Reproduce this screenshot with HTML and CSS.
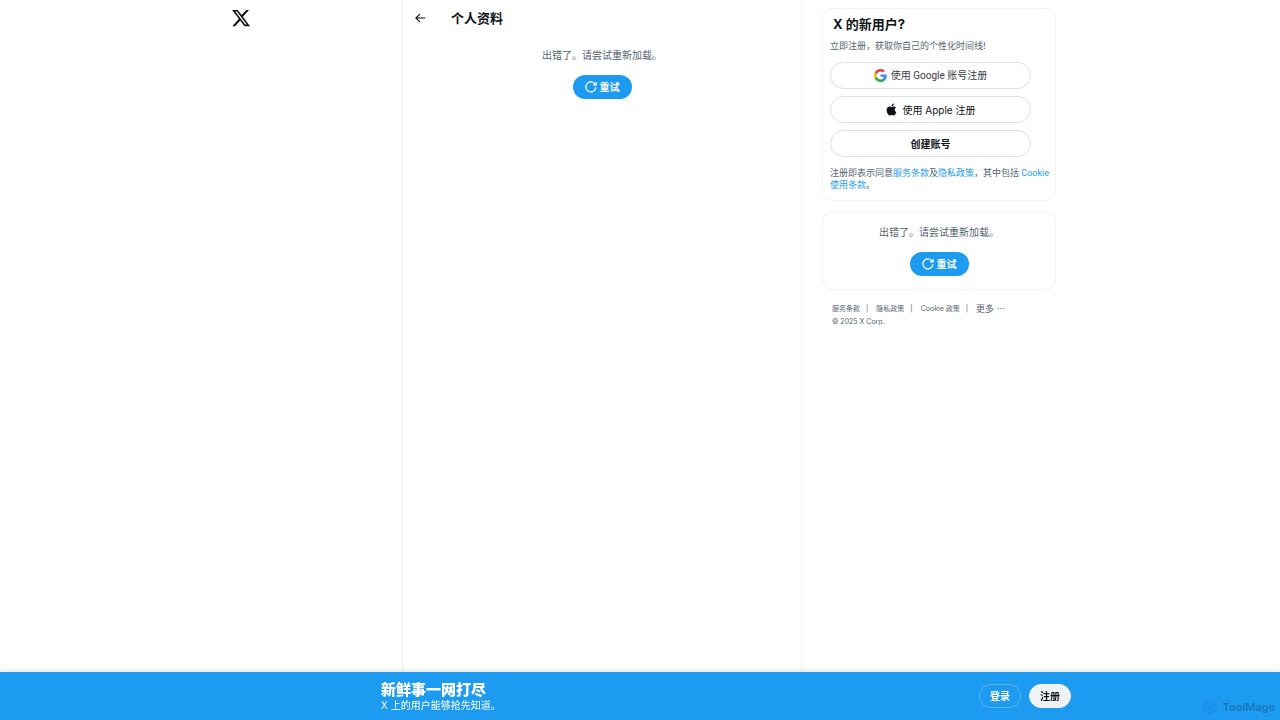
FILE: index.html
```html
<!DOCTYPE html>
<html lang="zh-CN">
<head>
    <meta charset="UTF-8">
    <meta name="viewport" content="width=device-width, initial-scale=1.0">
    <title>个人资料 / X</title>
    <link rel="stylesheet" href="styles.css">
</head>
<body>
    <!-- Shared icons -->
    <svg class="sprite" aria-hidden="true">
        <symbol id="icon-retry" viewBox="2 2 20.500 20.500">
            <path d="M20.500 12.500a8.500 8.500 0 1 1-2.600-6.600L20.600 8.500M21 3.500v5.200h-5.200" fill="none" stroke="currentColor" stroke-width="2"/>
        </symbol>
    </svg>

    <div class="page">
        <header class="nav">
            <a class="logo" href="#" aria-label="X">
                <svg viewBox="0 0 24 24"><path d="M18.244 2.250h3.308l-7.227 8.260 8.502 11.240H16.170l-5.214-6.817L4.990 21.750H1.680l7.730-8.835L1.254 2.250H8.080l4.713 6.231zm-1.161 17.520h1.833L7.084 4.126H5.117z"/></svg>
            </a>
        </header>

        <main class="main">
            <div class="top-bar">
                <button class="back-button" aria-label="返回">
                    <svg viewBox="0 0 24 24"><path d="M7.414 13l5.043 5.040-1.414 1.420L3.586 12l7.457-7.460 1.414 1.420L7.414 11H21v2H7.414z"/></svg>
                </button>
                <h1>个人资料</h1>
            </div>
            <div class="error">
                <p>出错了。请尝试重新加载。</p>
                <button class="retry-button"><svg><use href="#icon-retry"/></svg>重试</button>
            </div>
        </main>

        <aside class="sidebar">
            <section class="card signup">
                <h2>X 的新用户?</h2>
                <p class="intro">立即注册，获取你自己的个性化时间线!</p>
                <button class="signup-button google">
                    <svg viewBox="0 0 48 48">
                        <path fill="#EA4335" d="M24 9.500c3.540 0 6.710 1.220 9.210 3.600l6.850-6.850C35.900 2.380 30.470 0 24 0 14.620 0 6.510 5.380 2.560 13.220l7.980 6.190C12.430 13.720 17.740 9.500 24 9.500z"/>
                        <path fill="#4285F4" d="M46.980 24.550c0-1.570-.15-3.090-.38-4.550H24v9.020h12.940c-.58 2.960-2.260 5.480-4.780 7.180l7.730 6c4.510-4.180 7.090-10.360 7.090-17.650z"/>
                        <path fill="#FBBC05" d="M10.530 28.590c-.48-1.450-.76-2.990-.76-4.590s.27-3.140.76-4.590l-7.980-6.190C.92 16.460 0 20.120 0 24s.92 7.540 2.560 10.780l7.970-6.190z"/>
                        <path fill="#34A853" d="M24 48c6.480 0 11.930-2.130 15.890-5.810l-7.730-6c-2.150 1.450-4.920 2.300-8.160 2.300-6.260 0-11.570-4.220-13.470-9.910l-7.980 6.190C6.510 42.620 14.620 48 24 48z"/>
                    </svg>
                    使用 Google 账号注册
                </button>
                <button class="signup-button apple">
                    <svg viewBox="0 0 24 24"><path d="M16.365 1.430c0 1.140-.493 2.270-1.177 3.080-.744.900-1.990 1.570-2.987 1.570-.12 0-.23-.02-.3-.03-.01-.06-.04-.22-.04-.39 0-1.150.572-2.270 1.206-2.980.804-.940 2.142-1.640 3.248-1.680.03.130.05.280.05.430zm4.565 15.710c-.03.070-.463 1.580-1.518 3.120-.945 1.340-1.940 2.710-3.430 2.710-1.517 0-1.900-.88-3.630-.88-1.698 0-2.302.91-3.670.91-1.377 0-2.332-1.260-3.428-2.800-1.287-1.820-2.323-4.630-2.323-7.280 0-4.280 2.797-6.550 5.552-6.550 1.448 0 2.675.95 3.600.95.865 0 2.222-1.010 3.902-1.010.613 0 2.886.060 4.374 2.190-.13.090-2.383 1.370-2.383 4.190 0 3.260 2.854 4.420 2.955 4.450z"/></svg>
                    使用 Apple 注册
                </button>
                <button class="signup-button create">创建账号</button>
                <p class="legal">注册即表示同意<a href="#">服务条款</a>及<a href="#">隐私政策</a>，其中包括 <a href="#">Cookie 使用条款</a>。</p>
            </section>

            <section class="card error">
                <p>出错了。请尝试重新加载。</p>
                <button class="retry-button"><svg><use href="#icon-retry"/></svg>重试</button>
            </section>

            <footer class="footer">
                <nav>
                    <a href="#">服务条款</a><span>|</span>
                    <a href="#">隐私政策</a><span>|</span>
                    <a href="#">Cookie 政策</a><span>|</span>
                    <button class="more">更多 ···</button>
                </nav>
                <div>© 2025 X Corp.</div>
            </footer>
        </aside>
    </div>

    <div class="banner">
        <div class="banner-inner">
            <div class="banner-text">
                <h2>新鲜事一网打尽</h2>
                <p>X 上的用户能够抢先知道。</p>
            </div>
            <button class="banner-button">登录</button>
            <button class="banner-button filled">注册</button>
        </div>
        <div class="watermark">
            <svg viewBox="0 0 16 16">
                <path d="M8 1l6 3.500v7L8 15l-6-3.500v-7z"/>
                <path d="M8 4l3.500 2v4L8 12l-3.500-2V6zM2 4.500L4.500 6M14 4.500L11.500 6M8 12v3"/>
                <circle cx="8" cy="8" r="1.500"/>
            </svg>
            ToolMage
        </div>
    </div>
</body>
</html>
```
FILE: styles.css
```css
* {
    box-sizing: border-box;
}

body {
    margin: 0;
    font-family: Inter, "Noto Sans CJK SC", sans-serif;
    font-size: 10px;
    line-height: 14px;
    color: #0f1419;
    background-color: #fff;
}

h1, h2, p {
    margin: 0;
}

a {
    color: #1d9bf0;
    text-decoration: none;
}

button {
    font: inherit;
    color: inherit;
    padding: 0;
    border: none;
    background: none;
    cursor: pointer;
}

svg {
    fill: currentColor;
    flex-shrink: 0;
}

.sprite {
    position: absolute;
    width: 0;
    height: 0;
}

.page {
    display: flex;
    max-width: 842px;
    min-height: 100vh;
    margin: 0 auto;
}

.nav {
    flex: 0 1 183px;
    padding: 8px 12px;
}

.logo {
    display: inline-block;
    color: #0f1419;
}

.logo svg {
    display: block;
    width: 20px;
    height: 20px;
}

.main {
    flex: 0 1 400px;
    border-left: 1px solid #eff3f4;
    border-right: 1px solid #eff3f4;
}

.top-bar {
    display: flex;
    align-items: center;
    gap: 24px;
    height: 36px;
    padding: 0 10px;
}

.back-button svg {
    display: block;
    width: 14px;
    height: 14px;
}

h1 {
    font-size: 13px;
    line-height: 18px;
}

.error {
    display: flex;
    flex-direction: column;
    align-items: center;
    gap: 13px;
    padding: 12px 0;
    color: #536471;
}

.retry-button {
    display: flex;
    align-items: center;
    gap: 3px;
    height: 24px;
    padding: 0 12px;
    border-radius: 12px;
    background-color: #1d9bf0;
    color: #fff;
    font-weight: 700;
}

.retry-button svg {
    width: 12px;
    height: 12px;
}

.sidebar {
    flex: 0 0 259px;
    padding: 8px 5px 0 20px;
}

.card {
    border: 1px solid #eff3f4;
    border-radius: 11px;
}

.card.error {
    margin-top: 10px;
    padding: 13px 0;
}

.signup {
    padding: 6px 0 9px 7px;
}

.signup h2 {
    padding-left: 3px;
    font-size: 13px;
    line-height: 18px;
}

.intro {
    margin: 6px 0 9px;
    font-size: 9px;
    color: #536471;
}

.signup-button {
    display: flex;
    align-items: center;
    justify-content: center;
    gap: 4px;
    width: 201px;
    height: 27px;
    margin-bottom: 7px;
    border: 1px solid #d9e1e5;
    border-radius: 14px;
    color: #0f1419;
}

.signup-button svg {
    width: 13px;
    height: 13px;
}

.signup-button.google {
    font-family: Roboto, "Noto Sans CJK SC", sans-serif;
    color: #3c4043;
}

.signup-button.create {
    font-weight: 700;
}

.legal {
    padding-top: 3px;
    font-family: Roboto, "Noto Sans CJK SC", sans-serif;
    font-size: 9px;
    line-height: 12px;
    color: #536471;
}

.footer {
    padding: 12px 10px;
    font-size: 7px;
    line-height: 13px;
    color: #536471;
}

.footer nav {
    display: flex;
    align-items: center;
}

.footer nav a {
    color: inherit;
}

.footer nav span {
    margin: 0 8px 0 6px;
}

.more {
    font-size: 9px;
}

.banner {
    position: fixed;
    left: 0;
    right: 0;
    bottom: 0;
    background-color: #1d9bf0;
    color: #fff;
    box-shadow: 0 0 8px rgba(0, 0, 0, 0.15);
}

.banner-inner {
    display: flex;
    align-items: center;
    gap: 8px;
    max-width: 862px;
    height: 48px;
    margin: 0 auto;
    padding-left: 172px;
}

.banner-text {
    flex: 1;
}

.banner-text h2 {
    font-size: 15px;
    font-weight: 900;
    line-height: 18px;
}

.banner-text p {
    line-height: 13px;
}

.banner-button {
    height: 24px;
    padding: 0 10px;
    border: 1px solid #5cb7f4;
    border-radius: 12px;
    font-weight: 700;
}

.banner-button.filled {
    border-color: #eff3f4;
    background-color: #eff3f4;
    color: #0f1419;
}

.watermark {
    position: absolute;
    right: 5px;
    bottom: 5px;
    display: flex;
    align-items: center;
    gap: 4px;
    font-size: 11px;
    font-weight: 600;
    line-height: 16px;
    color: #1876b8;
}

.watermark svg {
    width: 16px;
    height: 16px;
    fill: none;
    stroke: #1b89e8;
}
```
